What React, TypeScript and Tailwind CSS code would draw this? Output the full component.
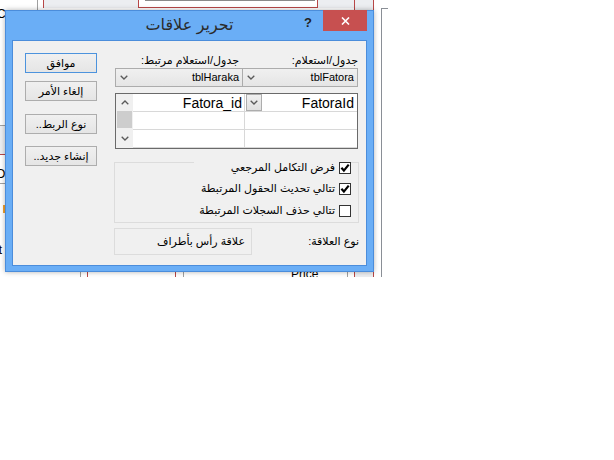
import React from "react";

/* ─── Small drawings ─────────────────────────────────────── */

function Chevron({ up = false }: { up?: boolean }) {
  return (
    <svg width="8" height="5" viewBox="0 0 8 5" className={up ? "rotate-180" : ""}>
      <polyline points="0.7,0.7 4,4 7.3,0.7" fill="none" stroke="#5a5a5a" strokeWidth="1.3" />
    </svg>
  );
}

function CheckBox({ checked }: { checked: boolean }) {
  return (
    <span className="w-[12px] h-[12px] border border-[#333333] bg-white flex items-center justify-center shrink-0">
      {checked && (
        <svg width="10" height="10" viewBox="0 0 10 10">
          <path d="M1.4 4.8 L3.9 7.6 L8.7 1.6" fill="none" stroke="#000" strokeWidth="2.2" />
        </svg>
      )}
    </span>
  );
}

function DlgButton({ label, primary = false }: { label: string; primary?: boolean }) {
  return (
    <button
      dir="rtl"
      className={`h-[20px] w-[72px] border bg-gradient-to-b from-[#f0f0f0] to-[#e5e5e5] text-[11px] leading-none text-black ${
        primary ? "border-[#4c93dd]" : "border-[#adadad]"
      }`}
    >
      {label}
    </button>
  );
}

function Combo({ text, className }: { text: string; className: string }) {
  return (
    <div
      className={`h-[19px] bg-gradient-to-b from-[#f0f0f0] to-[#e5e5e5] border-[#acacac] flex items-center pl-[4px] pr-[3px] ${className}`}
    >
      <Chevron />
      <span className="flex-1 text-right text-[11px] text-black">{text}</span>
    </div>
  );
}

const CHECKS = [
  { label: "فرض التكامل المرجعي", checked: true },
  { label: "تتالي تحديث الحقول المرتبطة", checked: true },
  { label: "تتالي حذف السجلات المرتبطة", checked: false },
];

/* ═══════════════════════════════════════════════════════════════
   APP
   ═══════════════════════════════════════════════════════════════ */

export default function App() {
  return (
    <div className="relative w-[614px] h-[460px] bg-white overflow-hidden font-['Liberation_Sans','DejaVu_Sans',sans-serif] text-black">
      {/* Access relationship window behind the dialog */}
      <div className="absolute left-0 top-0 w-[614px] h-[277px] overflow-hidden">
        <div className="absolute left-[37px] top-0 w-px h-[10px] bg-[#a0a0a0]" />
        <div className="absolute left-[43px] top-0 w-[95px] h-[8px] bg-[#eceef1] border-l border-[#b84747]" />
        <div className="absolute left-[138px] top-0 w-[180px] h-[8px] bg-white border-l border-r border-b border-[#b84747]" />
        <div className="absolute left-[145px] top-0 w-[170px] h-px bg-[#8a8a8a]" />
        <div className="absolute left-[318px] top-0 w-[55px] h-[8px] bg-[#eceef1]" />
        <div className="absolute left-[354px] top-0 w-[19px] h-[277px] bg-[#eceef1] border-l border-[#b84747]" />
        <div className="absolute left-[373px] top-0 w-px h-[277px] bg-[#b84747]" />
        <div className="absolute left-[347px] top-[260px] w-px h-[17px] bg-[#a0a0a0]" />
        <div className="absolute left-[381px] top-[8px] w-[7px] h-[269px] border-l border-t border-[#8a8f96]" />
        <span className="absolute left-[-3px] top-[5px] text-[12px]">C</span>
        <div className="absolute left-0 top-[125px] w-[10px] h-[30px] bg-[#eceef1] border-t border-[#a0a0a0] border-b border-b-[#b84747]" />
        <span className="absolute left-[-4px] top-[165px] text-[12px]">O</span>
        <div className="absolute left-0 top-[183px] w-[10px] h-px bg-[#a0a0a0]" />
        <div className="absolute left-[3px] top-[205px] w-[2px] h-[8px] bg-[#f0a030]" />
        <span className="absolute left-[-8px] top-[241px] text-[12px]">at</span>
        <div className="absolute left-[80px] top-[262px] w-px h-[15px] bg-[#a0a0a0]" />
        <div className="absolute left-[87px] top-[262px] w-px h-[15px] bg-[#b84747]" />
        <div className="absolute left-[175px] top-[262px] w-px h-[15px] bg-[#b84747]" />
        <div className="absolute left-[183px] top-[262px] w-px h-[15px] bg-[#a0a0a0]" />
        <span className="absolute left-[291px] top-[268px] text-[12px] leading-none">Price</span>
      </div>

      {/* Dialog window */}
      <div className="absolute left-[5px] top-[10px] w-[369px] h-[262px] bg-[#6aaef6] border border-[#4b8ddb] shadow-[0_0_5px_rgba(0,0,0,0.3)] flex flex-col">
        {/* Title bar */}
        <div className="h-[29px] flex items-start">
          <div className="flex-1" />
          <span dir="rtl" className="mt-[5px] text-[16px] leading-[18px] text-[#2b2b2b]">
            تحرير علاقات
          </span>
          <div className="flex-1 flex justify-end items-start">
            <span className="mt-[5px] mr-[11px] text-[13px] font-bold leading-none text-[#222]">?</span>
            <div className="-mt-px mr-[6px] w-[44px] h-[21px] bg-[#c75050] flex items-center justify-center">
              <svg width="9" height="8" viewBox="0 0 9 8">
                <path d="M1 0.5 L8 7.5 M8 0.5 L1 7.5" stroke="#fff" strokeWidth="1.6" />
              </svg>
            </div>
          </div>
        </div>

        {/* Client area */}
        <div className="flex-1 mx-[6px] mb-[5px] bg-[#f0f0f0] border border-[#4b8ddb] flex pl-[12px] pt-[12px]">
          {/* Buttons */}
          <div className="w-[72px] flex flex-col">
            <DlgButton label="موافق" primary />
            <div className="h-[8px]" />
            <DlgButton label="إلغاء الأمر" />
            <div className="h-[13px]" />
            <DlgButton label="نوع الربط.." />
            <div className="h-[12px]" />
            <DlgButton label="إنشاء جديد.." />
          </div>

          {/* Main panel */}
          <div className="ml-[17px] w-[245px] flex flex-col text-[11px]">
            <div dir="rtl" className="h-[15px] flex px-px">
              <span className="flex-1 text-right leading-[14px]">جدول/استعلام:</span>
              <span className="w-[128px] text-right pr-[4px] leading-[14px]">جدول/استعلام مرتبط:</span>
            </div>

            <div className="flex px-px">
              <Combo text="tblHaraka" className="w-[128px] border" />
              <Combo text="tblFatora" className="flex-1 border border-l-0" />
            </div>

            {/* Field grid */}
            <div className="mt-[6px] mx-px h-[56px] border border-[#6a6a6a] bg-white flex">
              <div className="w-[17px] bg-[#f0f0f0] flex flex-col">
                <div className="h-[17px] flex items-center justify-center">
                  <Chevron up />
                </div>
                <div className="h-[17px] mx-px bg-[#cdcdcd]" />
                <div className="flex-1 flex items-center justify-center">
                  <Chevron />
                </div>
              </div>
              <div className="flex-1 flex flex-col">
                {[0, 1, 2].map((r) => (
                  <div key={r} className="h-[18px] flex border-b border-[#d8d8d8]">
                    <div className="w-[112px] border-r border-[#d8d8d8] flex items-center justify-end pr-[2px] text-[14px] leading-none">
                      {r === 0 ? "Fatora_id" : ""}
                    </div>
                    <div className="flex-1 flex items-center text-[14px] leading-none">
                      {r === 0 && (
                        <>
                          <div className="ml-px w-[16px] h-[17px] border border-[#adadad] bg-gradient-to-b from-[#f0f0f0] to-[#e0e0e0] flex items-center justify-center">
                            <Chevron />
                          </div>
                          <span className="flex-1 text-right pr-[3px]">FatoraId</span>
                        </>
                      )}
                    </div>
                  </div>
                ))}
              </div>
            </div>

            {/* Options group */}
            <div className="mt-[13px] h-[61px] border border-[#dcdcdc] flex flex-col items-end pr-[7px]">
              {CHECKS.map((c, i) => (
                <div
                  key={c.label}
                  dir="rtl"
                  className={`flex items-center gap-[4px] h-[13px] ${
                    i === 0 ? "-mt-[2px] w-[157px] bg-[#f0f0f0]" : i === 1 ? "mt-[8px]" : "mt-[9px]"
                  }`}
                >
                  <CheckBox checked={c.checked} />
                  <span className="leading-none whitespace-nowrap">{c.label}</span>
                </div>
              ))}
            </div>

            {/* Relationship type */}
            <div dir="rtl" className="mt-[5px] h-[27px] flex items-center">
              <span className="flex-1 text-right leading-none">نوع العلاقة:</span>
              <div className="w-[138px] h-[27px] border border-[#dcdcdc] flex items-center pr-[6px]">
                <span className="leading-none">علاقة رأس بأطراف</span>
              </div>
            </div>
          </div>
        </div>
      </div>
    </div>
  );
}
